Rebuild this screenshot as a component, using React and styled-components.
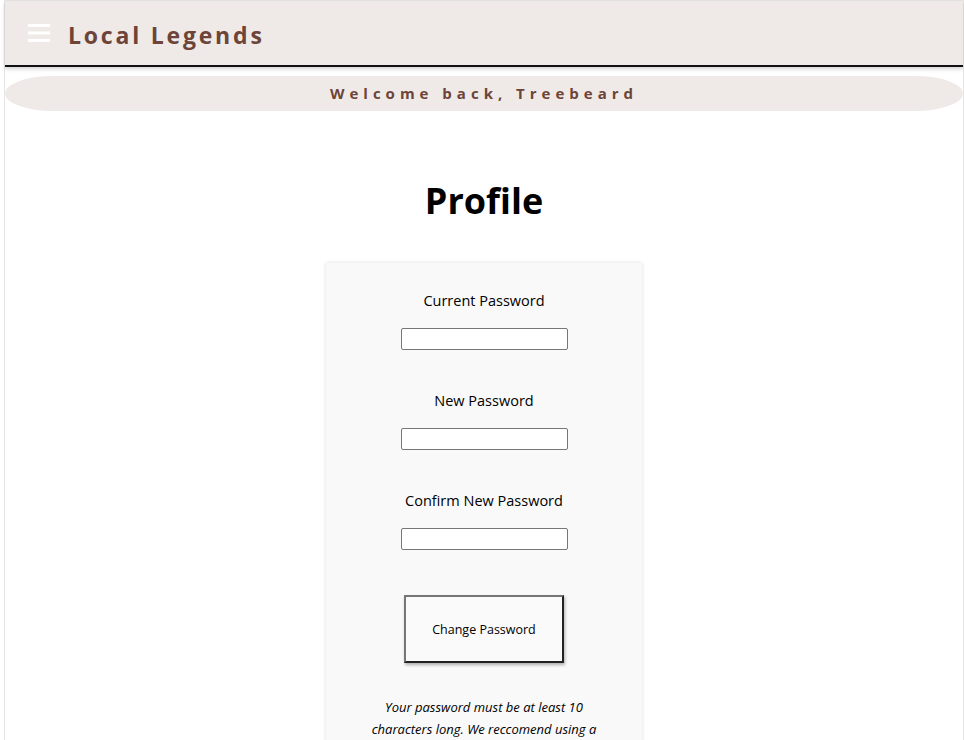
import React from 'react'
import styled, { createGlobalStyle } from 'styled-components'

const GlobalStyle = createGlobalStyle`
  body {
    margin: 0;
    font-family: "Open Sans", "Noto Sans", sans-serif;
    background: #ffffff;
    color: #000000;
  }
`

const brown = '#6d4437'
const sand = '#efeae8'

const Frame = styled.div`
  margin: 0 0 0 4px;
  min-height: 100vh;
  border: 1px solid #e6e6e6;
  border-bottom: none;
  box-sizing: border-box;
`

const Header = styled.header`
  display: flex;
  align-items: center;
  gap: 18px;
  height: 64px;
  padding-left: 23px;
  background: ${sand};
  border-bottom: 2px solid #111111;
  box-shadow: 0 2px 4px rgba(0, 0, 0, 0.18);
`

const Title = styled.span`
  padding-top: 4px;
  font-size: 23px;
  font-weight: 700;
  letter-spacing: 2.8px;
  color: ${brown};
`

const Banner = styled.div`
  display: flex;
  align-items: center;
  justify-content: center;
  height: 35px;
  margin-top: 9px;
  padding-bottom: 2px;
  box-sizing: border-box;
  border-radius: 48px / 50%;
  background: ${sand};
  font-size: 15px;
  font-weight: 700;
  letter-spacing: 5px;
  color: ${brown};
`

const Heading = styled.h1`
  margin: 68px 0 40px;
  text-align: center;
  font-size: 36px;
  line-height: 44px;
  font-weight: 700;
`

const Card = styled.section`
  width: 316px;
  margin: 0 auto;
  padding: 28px 0 30px;
  box-sizing: border-box;
  background: #f9f9f9;
  box-shadow: 0 0 4px rgba(0, 0, 0, 0.14);
  text-align: center;
`

const Field = styled.div`
  display: flex;
  flex-direction: column;
  align-items: center;
  gap: 17px;
  margin-bottom: 41px;
`

const Label = styled.label`
  font-size: 14.5px;
  line-height: 20px;
`

const Input = styled.input`
  width: 167px;
  height: 22px;
  box-sizing: border-box;
  border: 1px solid #767676;
  border-radius: 2px;
  background: #ffffff;
`

const Button = styled.button`
  width: 160px;
  height: 68px;
  margin-top: 4px;
  background: #fafafa;
  border: 2px solid;
  border-color: #767676 #222222 #222222 #767676;
  box-shadow: 1px 2px 3px rgba(0, 0, 0, 0.3);
  font-family: inherit;
  font-size: 12.5px;
  color: #000000;
`

const Note = styled.p`
  margin: 33px 0 0;
  padding: 0 38px;
  font-size: 13px;
  line-height: 22px;
  font-style: italic;
`

const MenuIcon = () => (
  <svg width="22" height="18" viewBox="0 0 22 18">
    <rect x="0" y="0" width="22" height="3" fill="#ffffff" />
    <rect x="0" y="7.5" width="22" height="3" fill="#ffffff" />
    <rect x="0" y="15" width="22" height="3" fill="#ffffff" />
  </svg>
)

const fields = ['Current Password', 'New Password', 'Confirm New Password']

export default function App() {
  return (
    <>
      <GlobalStyle />
      <Frame>
        <Header>
          <MenuIcon />
          <Title>Local Legends</Title>
        </Header>
        <Banner>Welcome back, Treebeard</Banner>
        <Heading>Profile</Heading>
        <Card>
          {fields.map((name) => (
            <Field key={name}>
              <Label>{name}</Label>
              <Input type="password" />
            </Field>
          ))}
          <Button>Change Password</Button>
          <Note>
            Your password must be at least 10 characters long. We reccomend
            using a mix of letters, numbers and symbols.
          </Note>
        </Card>
      </Frame>
    </>
  )
}
